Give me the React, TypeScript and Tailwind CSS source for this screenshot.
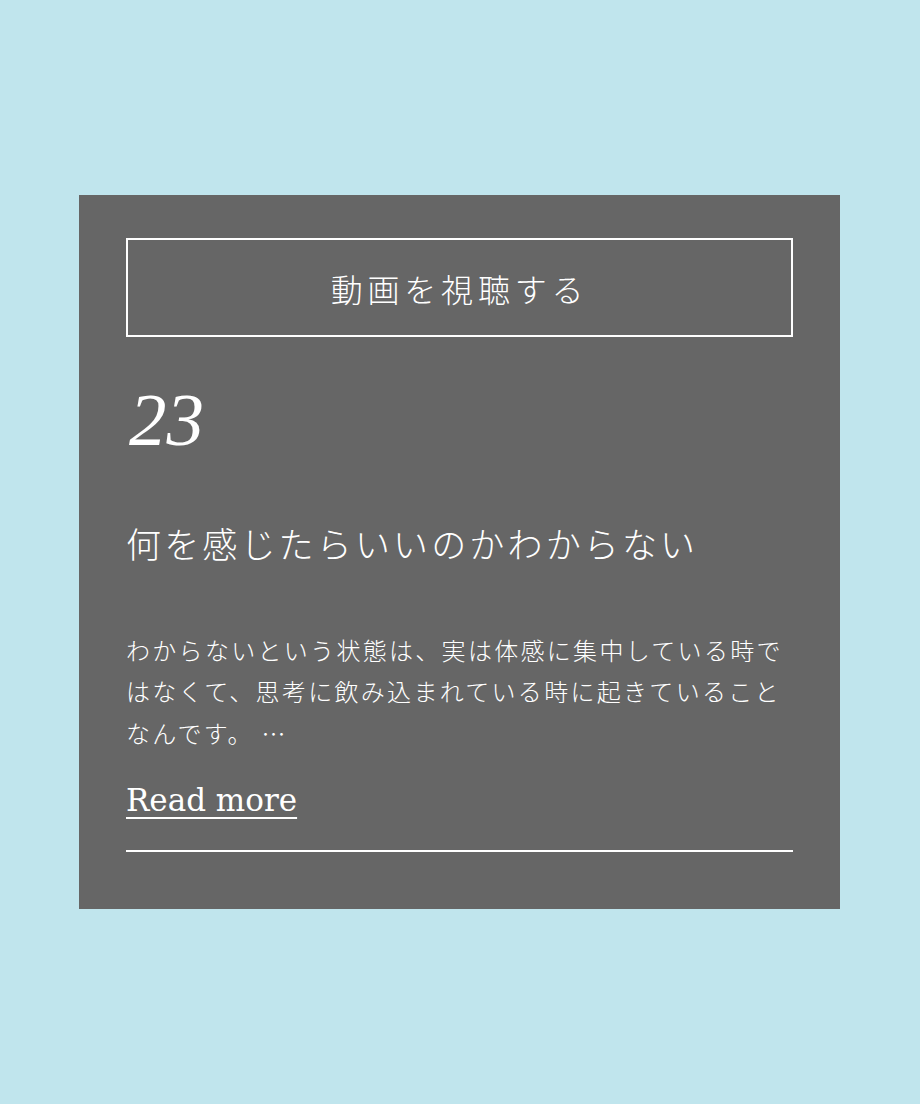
export default function App() {
  return (
    <div className="min-h-screen w-full bg-[#c0e5ed] flex items-center">
      <div className="ml-[79px] w-[761px] h-[714px] bg-[#666666] px-[47px] pt-[43px] flex flex-col text-white [font-family:'DejaVu_Serif','Noto_Sans_CJK_JP',serif]">
        {/* Watch button */}
        <a
          href="#"
          className="h-[99px] border-2 border-white flex items-center justify-center text-[32px] tracking-[0.15em] [font-family:'Noto_Sans_CJK_JP',sans-serif] font-light"
        >
          動画を視聴する
        </a>

        {/* Episode number */}
        <p className="mt-[45px] text-[75px] leading-[1] italic [font-family:'Liberation_Serif',serif] pl-[3px]">
          23
        </p>

        {/* Title */}
        <h2 className="mt-[63px] text-[35px] leading-[1.3] tracking-[0.09em] [font-family:'Noto_Sans_CJK_JP',sans-serif] font-light">
          何を感じたらいいのかわからない
        </h2>

        {/* Excerpt */}
        <p className="mt-[63px] text-[24px] leading-[41.5px] tracking-[2.3px] [font-family:'Noto_Sans_CJK_JP',sans-serif] font-light">
          わからないという状態は、実は体感に集中している時ではなくて、思考に飲み込まれている時に起きていることなんです。 …
        </p>

        <a
          href="#"
          className="mt-[27px] self-start text-[31px] leading-[1.3] underline underline-offset-[6px] decoration-2 [font-family:'DejaVu_Serif',serif]"
        >
          Read more
        </a>

        <div className="mt-[30px] h-[2px] bg-white" />
      </div>
    </div>
  );
}
